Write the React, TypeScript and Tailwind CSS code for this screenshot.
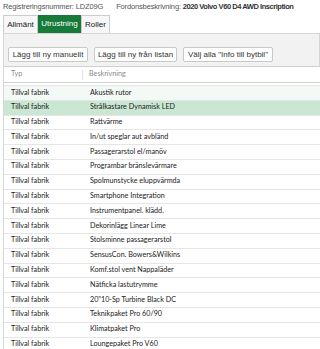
import React from 'react';

const rows = [
  'Akustik rutor',
  'Strålkastare Dynamisk LED',
  'Rattvärme',
  'In/ut speglar aut avbländ',
  'Passagerarstol el/manöv',
  'Programbar bränslevärmare',
  'Spolmunstycke eluppvärmda',
  'Smartphone Integration',
  'Instrumentpanel. klädd.',
  'Dekorinlägg Linear Lime',
  'Stolsminne passagerarstol',
  'SensusCon. Bowers&Wilkins',
  'Komf.stol vent Nappaläder',
  'Nätficka lastutrymme',
  '20"10-Sp Turbine Black DC',
  'Teknikpaket Pro 60/90',
  'Klimatpaket Pro',
  'Loungepaket Pro V60',
];

export default function App() {
  return (
    <div className="w-[320px] h-[349px] overflow-hidden bg-white font-['Liberation_Sans',Arial,sans-serif] text-[#333]">
      {/* Vehicle info */}
      <div className="flex h-[13px] items-center pl-[3px] text-[7.5px] text-[#555]">
        <span className="tracking-[-0.15px]">Registreringsnummer: LDZ09G</span>
        <span className="ml-[13px] tracking-[-0.15px]">Fordonsbeskrivning:</span>
        <span className="ml-[2px] font-bold tracking-[-0.45px] text-[#333]">2020 Volvo V60 D4 AWD Inscription</span>
      </div>

      {/* Tabs */}
      <div className="mt-[2px] flex h-[18px] items-end pl-[3px] text-[8px]">
        <div className="flex h-full w-[35px] items-center justify-center border border-b-0 border-[#ccc] bg-[#f7f7f7] text-[#222]">Allmänt</div>
        <div className="flex h-full w-[43px] items-center justify-center bg-[#177a3b] text-white">Utrustning</div>
        <div className="flex h-full w-[29px] items-center justify-center border border-b-0 border-[#ccc] bg-[#f7f7f7] text-[#222]">Roller</div>
      </div>

      {/* Toolbar */}
      <div className="ml-[3px] h-[33px] border border-b-0 border-[#d6d6d6] bg-[#f2f2f2] pt-[13px] pl-[4px]">
        <div className="flex gap-[6px] text-[8px] text-[#333]">
          <button className="h-[15px] w-[80px] rounded-[2px] border border-[#c8c8c8] bg-white">Lägg till ny manuellt</button>
          <button className="h-[15px] w-[83px] rounded-[2px] border border-[#c8c8c8] bg-white">Lägg till ny från listan</button>
          <button className="h-[15px] w-[90px] rounded-[2px] border border-[#c8c8c8] bg-white">Välj alla "Info till bytbil"</button>
        </div>
      </div>

      {/* Table */}
      <div className="ml-[3px] border-l border-[#d6d6d6] font-['Lato','Open_Sans',sans-serif] text-[7.2px]">
        <div className="flex h-[17px] items-center border-y border-[#d0d0d0] text-[#8a8a8a]">
          <div className="flex h-[10px] w-[79px] items-center border-r border-[#e2e2e2] pl-[7px]">Typ</div>
          <div className="pl-[6px]">Beskrivning</div>
        </div>
        <div className="h-[3px] border-b border-[#e6e6e6]" />
        {rows.map((r, i) => (
          <div
            key={r}
            className={
              'flex h-[14.8px] items-center border-b border-[#e6e6e6] ' +
              (i === 1 ? 'bg-[#c9e7d2]' : i === 0 ? 'bg-[#f3f9f5]' : 'bg-white')
            }
          >
            <div className="w-[79px] pl-[7px] text-[#222]">Tillval fabrik</div>
            <div className="pl-[7px] text-[#222]">{r}</div>
          </div>
        ))}
      </div>
    </div>
  );
}
